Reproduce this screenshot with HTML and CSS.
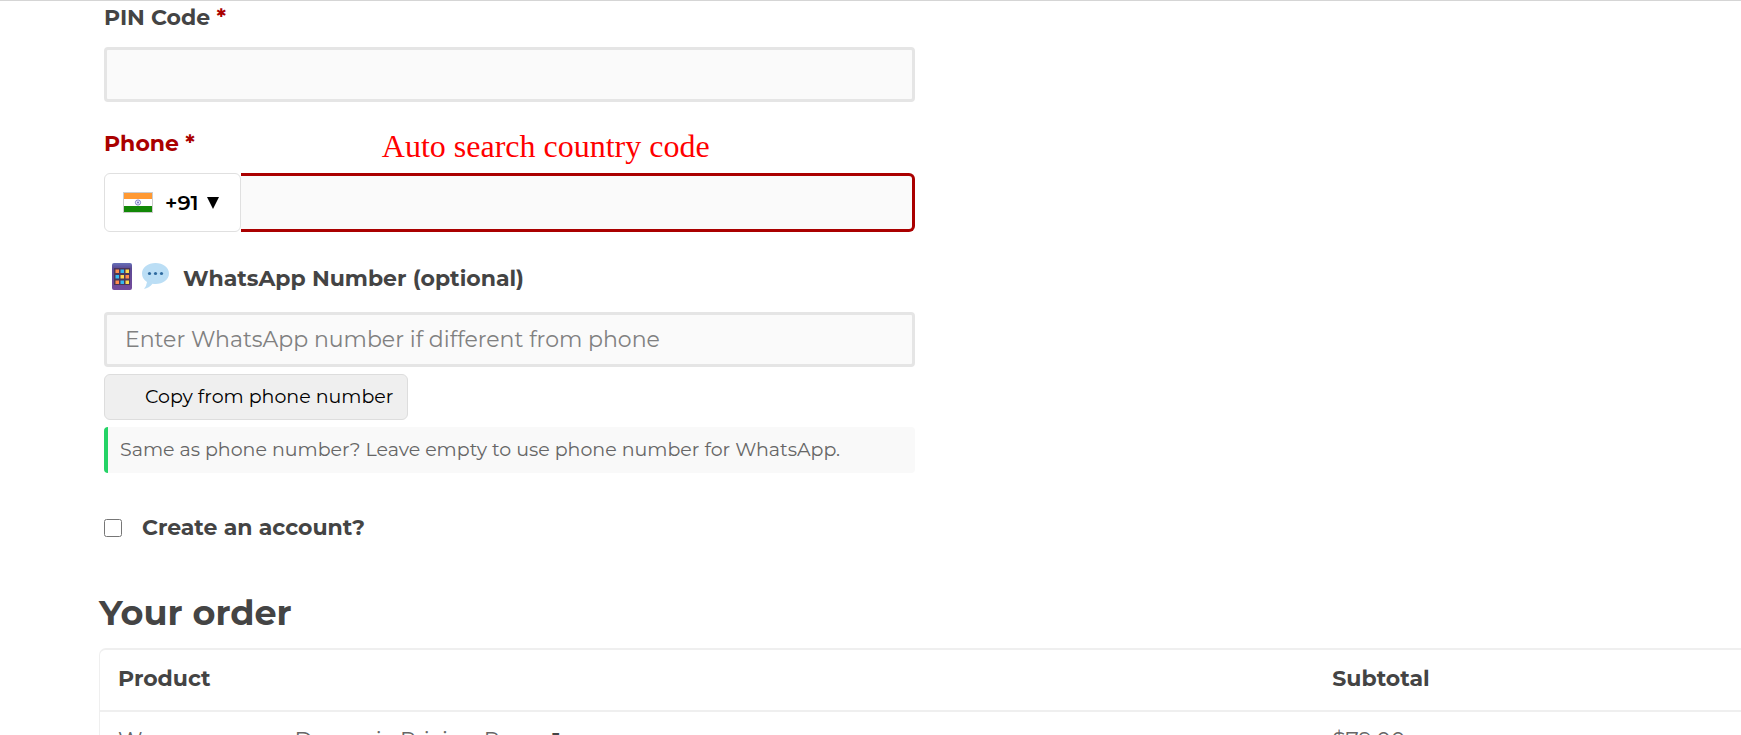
FILE: index.html
```html
<!DOCTYPE html>
<html lang="en-IN">
<head>
    <title>Checkout</title>
    <meta charset="UTF-8">
    <meta name="viewport" content="width=device-width, initial-scale=1">
    <link rel="stylesheet" href="styles.css">
</head>
<body>

<form class="checkout">
    <div class="billing">
        <div class="field">
            <label class="field-label" for="pin">PIN Code <abbr class="required">*</abbr></label>
            <input class="input" type="text" id="pin">
        </div>

        <div class="field phone">
            <div class="label-row">
                <label class="field-label invalid" for="phone">Phone <abbr class="required">*</abbr></label>
                <span class="note">Auto search country code</span>
            </div>
            <div class="phone-row">
                <button class="country" type="button">
                    <svg class="flag" viewBox="0 0 30 21" width="30" height="21">
                        <rect width="30" height="21" fill="#ccc"/>
                        <rect x="1" y="1" width="28" height="6" fill="#f93"/>
                        <rect x="1" y="7" width="28" height="7" fill="#fff"/>
                        <rect x="1" y="14" width="28" height="6" fill="#128807"/>
                        <circle cx="15" cy="10.5" r="2.6" fill="#eef" stroke="#7777c0" stroke-width="0.9"/>
                        <circle cx="15" cy="10.5" r="0.9" fill="#6666bb"/>
                    </svg>
                    <span>+91</span>
                    <svg class="arrow" viewBox="0 0 12 12" width="12" height="12"><path d="M0 0h12L6 12z"/></svg>
                </button>
                <input class="input phone-input" type="tel" id="phone">
            </div>
        </div>

        <div class="field whatsapp">
            <label class="field-label icon-label" for="whatsapp">
                <svg viewBox="0 0 20 27" width="20" height="27">
                    <defs>
                        <linearGradient id="case" x1="0" y1="0" x2="0" y2="1">
                            <stop offset="0" stop-color="#6670b8"/>
                            <stop offset="0.2" stop-color="#5c4a94"/>
                            <stop offset="1" stop-color="#744a9c"/>
                        </linearGradient>
                    </defs>
                    <rect width="20" height="27" rx="2" fill="url(#case)"/>
                    <rect x="2" y="5" width="16" height="17" fill="#4a3558"/>
                    <path fill="#ff8a4c" d="M3.500 6.500H7V10H3.500zM13.500 12H17v3.500h-3.500zM3.500 17.500H7V21H3.500z"/>
                    <path fill="#35b8f0" d="M8.500 6.500H12V10H8.500zM3.500 12H7v3.500H3.500zM8.500 17.500H12V21H8.500z"/>
                    <path fill="#ffd84c" d="M13.500 6.500H17V10h-3.500zM8.500 12H12v3.500H8.500zM13.500 17.500H17V21h-3.500z"/>
                </svg>
                <svg viewBox="0 0 27 27" width="27" height="27">
                    <path fill="#bbdef5" d="M13.500 0C21 0 27 4.500 27 10.500S21 21 13.500 21q-1.500 0-3-.2Q7 25 2 26q2.500-3 3-7Q0 16 0 10.500C0 4.500 6 0 13.500 0z"/>
                    <circle cx="7.500" cy="10.500" r="1.600" fill="#2f6a9f"/>
                    <circle cx="13.500" cy="10.500" r="1.600" fill="#2f6a9f"/>
                    <circle cx="19.500" cy="10.500" r="1.600" fill="#2f6a9f"/>
                </svg>
                <span>WhatsApp Number (optional)</span>
            </label>
            <input class="input" type="tel" id="whatsapp" placeholder="Enter WhatsApp number if different from phone">
            <button class="copy" type="button">Copy from phone number</button>
            <p class="hint">Same as phone number? Leave empty to use phone number for WhatsApp.</p>
        </div>

        <label class="account">
            <input type="checkbox">
            <span>Create an account?</span>
        </label>
    </div>

    <div class="order">
        <h3>Your order</h3>
        <table>
            <thead>
                <tr><th class="product">Product</th><th>Subtotal</th></tr>
            </thead>
            <tbody>
                <tr><td>Woocommerce Dynamic Pricing Pro&nbsp; <strong>× 1</strong></td><td>$79.00</td></tr>
            </tbody>
        </table>
    </div>
</form>

</body>
</html>
```
FILE: styles.css
```css
* {
  box-sizing: border-box;
}

body {
  margin: 0;
  border-top: 1px solid #d5d5d5;
  overflow: hidden;
  font-family: Montserrat, Inter, sans-serif;
  font-size: 22px;
  line-height: 32px;
  color: #666;
  background: #fff;
}

.billing {
  width: 53%;
  padding: 1px 8px 0 104px;
}

.field {
  display: flex;
  flex-direction: column;
  margin-bottom: 26px;
}

.field-label {
  margin-bottom: 13px;
  font-weight: 700;
  color: #444;
}

.required {
  color: #a00;
}

.invalid {
  color: #a00;
}

.input {
  width: 100%;
  height: 55px;
  padding: 0 18px;
  border: 3px solid #e5e5e5;
  border-radius: 4px;
  background: #fafafa;
  font: inherit;
  color: #666;
}

.input::placeholder {
  color: #808080;
}

.label-row {
  display: flex;
}

.note {
  margin-left: 187px;
  font-family: "Times New Roman", "Liberation Serif", serif;
  font-size: 32px;
  line-height: 36px;
  color: #f00;
}

.phone-row {
  display: flex;
}

.country {
  display: flex;
  flex: none;
  align-items: center;
  width: 137px;
  padding: 0 18px;
  border: 1px solid #e0e0e0;
  border-radius: 6px;
  background: #fff;
  font: inherit;
  font-size: 21px;
  font-weight: 600;
  color: #000;
}

.flag {
  margin-right: 12px;
}

.arrow {
  margin-left: 8px;
}

.phone-input {
  height: 59px;
  border-color: #a00;
  border-left: 0;
  border-radius: 0 6px 6px 0;
}

.whatsapp {
  margin-top: 31px;
}

.icon-label {
  display: flex;
  align-items: flex-start;
  gap: 10px;
  margin-bottom: 17px;
  padding-left: 8px;
}

.icon-label span {
  margin-left: 4px;
}

.copy {
  align-self: flex-start;
  height: 46px;
  margin-top: 7px;
  padding: 0 14px 0 40px;
  border: 1px solid #ddd;
  border-radius: 6px;
  background: #efefef;
  font: inherit;
  font-size: 19px;
  color: #000;
}

.hint {
  margin: 7px 0 0;
  padding: 7px 12px;
  border-left: 4px solid #25d366;
  border-radius: 4px;
  background: #f9f9f9;
  font-size: 19px;
}

.account {
  display: flex;
  align-items: center;
  gap: 20px;
  margin-top: 39px;
  font-weight: 700;
  color: #444;
}

.account input {
  width: 18px;
  height: 18px;
  margin: 0;
}

.order {
  margin-top: 45px;
  padding-left: 99px;
}

.order h3 {
  margin: 0 0 11px;
  font-size: 35px;
  line-height: 48px;
  color: #444;
}

.order table {
  width: 100%;
  border: 2px solid #efefef;
  border-left-width: 1px;
  border-right: 0;
  border-radius: 7px 0 0 0;
  border-spacing: 0;
}

.order th,
.order td {
  padding: 13px 18px 15px;
  text-align: left;
}

.order th {
  border-bottom: 2px solid #efefef;
  color: #444;
}

.order strong {
  color: #444;
}

.product {
  width: 74%;
}
```
